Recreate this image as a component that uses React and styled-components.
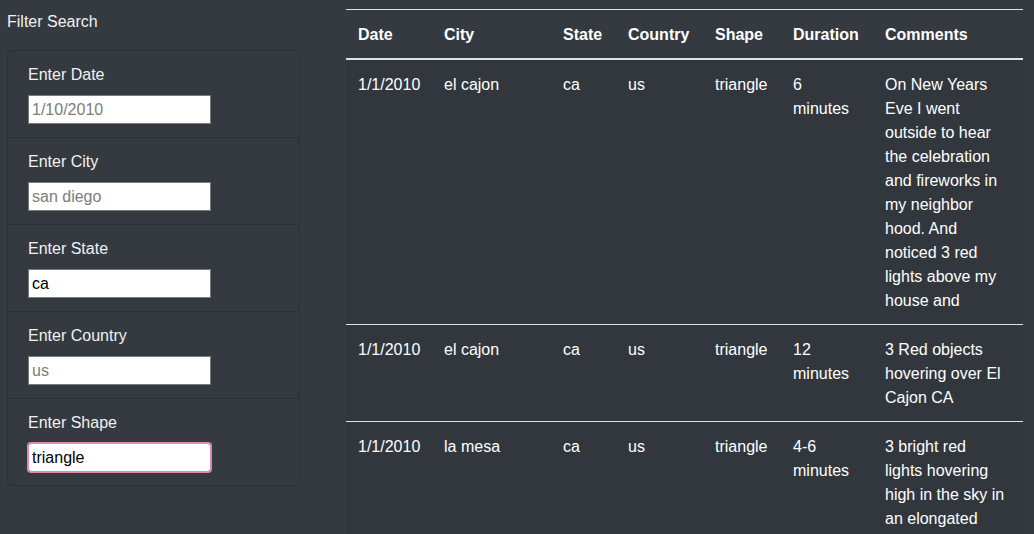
import React from "react";
import styled, { createGlobalStyle } from "styled-components";

const GlobalStyle = createGlobalStyle`
  html, body {
    margin: 0;
    background: #343a40;
  }
  body {
    font-family: "Liberation Sans", Arial, sans-serif;
    color: #fff;
    font-size: 16px;
    line-height: 24px;
  }
`;

const filters = [
  { label: "Enter Date", placeholder: "1/10/2010" },
  { label: "Enter City", placeholder: "san diego" },
  { label: "Enter State", value: "ca" },
  { label: "Enter Country", placeholder: "us" },
  { label: "Enter Shape", value: "triangle", focused: true },
];

const columns = [
  { title: "Date", width: 86 },
  { title: "City", width: 119 },
  { title: "State", width: 65 },
  { title: "Country", width: 87 },
  { title: "Shape", width: 78 },
  { title: "Duration", width: 92 },
  { title: "Comments", width: 150 },
];

const sightings = [
  {
    date: "1/1/2010",
    city: "el cajon",
    state: "ca",
    country: "us",
    shape: "triangle",
    duration: "6 minutes",
    comments:
      "On New Years Eve I went outside to hear the celebration and fireworks in my neighbor hood. And noticed 3 red lights above my house and",
  },
  {
    date: "1/1/2010",
    city: "el cajon",
    state: "ca",
    country: "us",
    shape: "triangle",
    duration: "12 minutes",
    comments: "3 Red objects hovering over El Cajon CA",
  },
  {
    date: "1/1/2010",
    city: "la mesa",
    state: "ca",
    country: "us",
    shape: "triangle",
    duration: "4-6 minutes",
    comments: "3 bright red lights hovering high in the sky in an elongated triangle formation",
  },
];

export default function App() {
  return (
    <>
      <GlobalStyle />
      <Page>
        <Sidebar>
          <SidebarTitle>Filter Search</SidebarTitle>
          <FilterList>
            {filters.map((f) => (
              <FilterItem key={f.label}>
                <FilterLabel>{f.label}</FilterLabel>
                <FilterInput
                  type="text"
                  placeholder={f.placeholder}
                  defaultValue={f.value}
                  $focused={f.focused}
                />
              </FilterItem>
            ))}
          </FilterList>
        </Sidebar>
        <TableWrap>
          <Table>
            <colgroup>
              {columns.map((c) => (
                <col key={c.title} style={{ width: c.width }} />
              ))}
            </colgroup>
            <thead>
              <tr>
                {columns.map((c) => (
                  <HeadCell key={c.title}>{c.title}</HeadCell>
                ))}
              </tr>
            </thead>
            <tbody>
              {sightings.map((s, i) => (
                <tr key={i}>
                  <Cell>{s.date}</Cell>
                  <Cell>{s.city}</Cell>
                  <Cell>{s.state}</Cell>
                  <Cell>{s.country}</Cell>
                  <Cell>{s.shape}</Cell>
                  <Cell>{s.duration}</Cell>
                  <Cell $wide>{s.comments}</Cell>
                </tr>
              ))}
            </tbody>
          </Table>
        </TableWrap>
      </Page>
    </>
  );
}

const Page = styled.div`
  display: grid;
  grid-template-columns: 293px 677px;
  column-gap: 46px;
  padding: 9px 0 0 7px;
  height: 525px;
  overflow: hidden;
`;

const Sidebar = styled.aside`
  display: flex;
  flex-direction: column;
`;

const SidebarTitle = styled.div`
  padding-top: 1px;
  margin-bottom: 16px;
  color: #f1f1f1;
`;

const FilterList = styled.ul`
  list-style: none;
  margin: 0;
  padding: 0;
  border: 1px solid rgba(0, 0, 0, 0.14);
  border-radius: 4px;
`;

const FilterItem = styled.li`
  padding: 12px 20px;
  border-top: 1px solid rgba(0, 0, 0, 0.14);
  height: 62px;

  &:first-child {
    border-top: none;
  }
`;

const FilterLabel = styled.label`
  display: block;
  margin-bottom: 8px;
  color: #f1f1f1;
`;

const FilterInput = styled.input`
  box-sizing: border-box;
  width: 183px;
  height: 29px;
  padding: 1px 3px;
  margin: 0;
  border: 1px solid #7a7a7a;
  border-radius: ${(p) => (p.$focused ? "3px" : "0")};
  background: #fff;
  color: #000;
  font-family: "Liberation Sans", Arial, sans-serif;
  font-size: 16px;
  outline: ${(p) => (p.$focused ? "2px solid #d98bb0" : "none")};
  outline-offset: -1px;

  &::placeholder {
    color: #7c7c7c;
  }
`;

const TableWrap = styled.div`
  background: #32373d;
`;

const Table = styled.table`
  width: 677px;
  table-layout: fixed;
  border-collapse: collapse;
  color: #fff;
`;

const HeadCell = styled.th`
  text-align: left;
  font-weight: bold;
  padding: 13px 12px 11px;
  vertical-align: bottom;
  border-top: 1px solid #dee2e6;
  border-bottom: 2px solid #dee2e6;
  background: #343a40;
`;

const Cell = styled.td`
  padding: 13px ${(p) => (p.$wide ? "16px" : "12px")} 11px 12px;
  vertical-align: top;
  border-top: 1px solid #dee2e6;
`;
